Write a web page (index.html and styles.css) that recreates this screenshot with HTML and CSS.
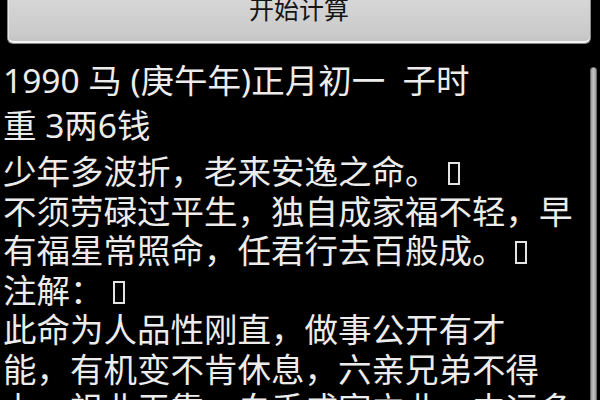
FILE: index.html
```html
<!DOCTYPE html>
<html>
<head>
<meta charset="utf-8">
<title>八字称骨</title>
<link rel="stylesheet" href="styles.css">
</head>
<body>
<div class="screen">
	<div class="calcBtn"><span class="calcLabel">开始计算</span></div>
	<div class="result">
		<div class="resultText">
			<p class="head">1990 马 (庚午年)正月初一&nbsp;&nbsp;子时</p>
			<p class="head">重 3两6钱</p>
			<p class="poem">少年多波折，老来安逸之命。<span class="tofu"></span><br>不须劳碌过平生，独自成家福不轻，早<br>有福星常照命，任君行去百般成。<span class="tofu"></span><br>注解：<span class="tofu"></span><br>此命为人品性刚直，做事公开有才<br>能，有机变不肯休息，六亲兄弟不得<br>力，祖业无靠，白手成家立业，中运多</p>
		</div>
		<div class="scrollbar"></div>
	</div>
</div>
</body>
</html>
```

FILE: styles.css
```css
html, body {
	margin: 0;
	padding: 0;
	background: #000000;
}
.screen {
	width: 600px;
	height: 400px;
	overflow: hidden;
	background: #000000;
	font-family: "Noto Sans", "Noto Sans CJK SC", sans-serif;
	color: #ececec;
}
/* top button, its upper half is scrolled off screen */
.calcBtn {
	margin: 0 9px 0 7px;
	height: 43px;
	border: 1px solid #8a8a8a;
	border-top: none;
	border-radius: 0 0 6px 6px;
	background: linear-gradient(#d6d6d6, #cacaca 80%, #c2c2c2);
	box-shadow: inset 1px 0 0 #e6e6e6, inset 0 -2px 0 #f2f2f2;
	text-align: center;
}
.calcLabel {
	display: inline-block;
	font-size: 25px;
	line-height: 16px;
	color: #151515;
	font-family: "Noto Sans CJK SC", sans-serif;
}
.result {
	display: flex;
	margin-top: 14px;
}
.resultText {
	flex: 1;
	padding-left: 3px;
	white-space: nowrap;
}
.head {
	margin: 0;
	font-size: 33.5px;
	line-height: 45px;
}
.poem {
	margin: 4px 0 0 0;
	font-size: 33.5px;
	line-height: 39.5px;
}
.tofu {
	display: inline-block;
	width: 8px;
	height: 19px;
	border: 2px solid #e4e4e4;
	margin-left: 9px;
	vertical-align: -1px;
}
.scrollbar {
	width: 5px;
	margin: 9px 3px 0 0;
	height: 400px;
	border: 1px solid #6c6c6c;
	border-radius: 3px 3px 0 0;
	background: linear-gradient(90deg, #9a9a9a, #c4c4c4 50%, #9a9a9a);
}
```
